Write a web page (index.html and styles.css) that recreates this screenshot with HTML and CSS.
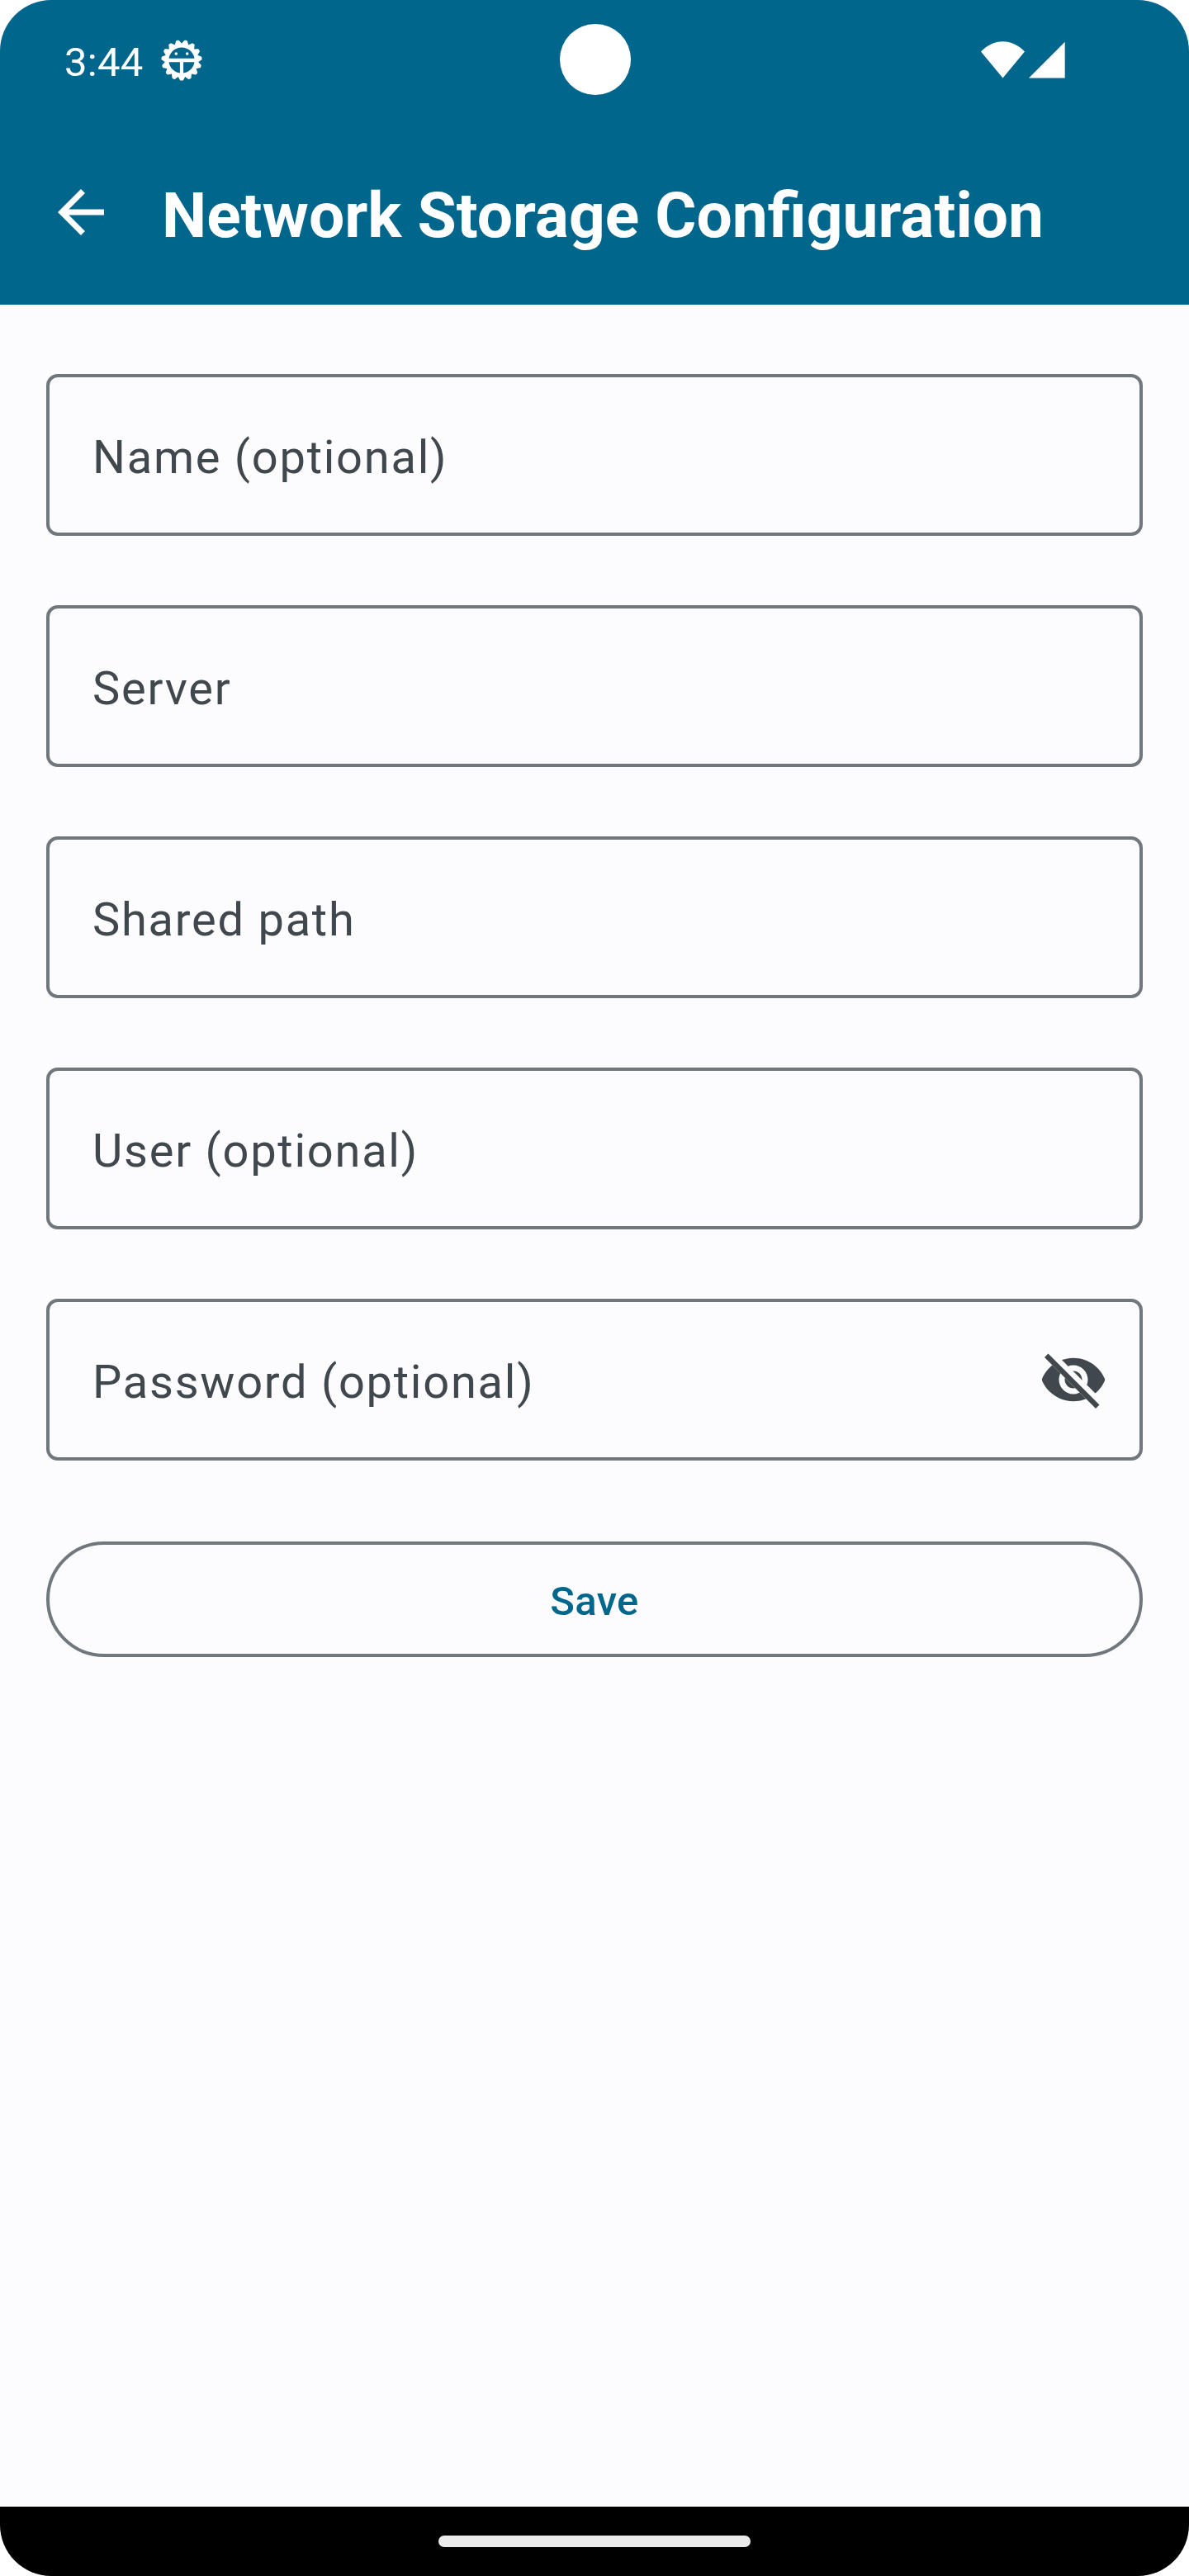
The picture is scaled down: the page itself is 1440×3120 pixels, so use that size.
FILE: index.html
```
<!DOCTYPE html>
<html lang="en">
<head>
<meta charset="utf-8">
<title>Network Storage Configuration</title>
<link rel="stylesheet" href="styles.css">
</head>
<body>
<div class="screen">
  <header class="header">
    <div class="status-bar">
      <span class="clock">3:44</span>
      <svg class="gear" viewBox="-26 -26 52 52">
        <defs><path id="tooth" d="M-3.4-18.5L-.8-23.2H.8L3.4-18.5Z" stroke="#fff" stroke-width="2.8" stroke-linejoin="round"/></defs>
        <g fill="#fff">
          <use href="#tooth" transform="rotate(12)"/><use href="#tooth" transform="rotate(36)"/><use href="#tooth" transform="rotate(60)"/><use href="#tooth" transform="rotate(84)"/><use href="#tooth" transform="rotate(108)"/><use href="#tooth" transform="rotate(132)"/><use href="#tooth" transform="rotate(156)"/><use href="#tooth" transform="rotate(180)"/><use href="#tooth" transform="rotate(204)"/><use href="#tooth" transform="rotate(228)"/><use href="#tooth" transform="rotate(252)"/><use href="#tooth" transform="rotate(276)"/><use href="#tooth" transform="rotate(300)"/><use href="#tooth" transform="rotate(324)"/><use href="#tooth" transform="rotate(348)"/>
        </g>
        <circle r="17.8" fill="#00668b" stroke="#fff" stroke-width="4.4"/>
        <path d="M-17-2.2H17V2.2H2.1V17H-2.1V2.2H-17Z" fill="#fff"/>
        <circle cx="-6.7" cy="-7.9" r="1.8" fill="#fff"/><circle cx="6.7" cy="-7.9" r="1.8" fill="#fff"/>
      </svg>
      <span class="camera"></span>
      <svg class="signals" viewBox="0 0 102 45">
        <path d="M0 12.5C7.500 4.500 17 .2 26.500 .2S45.500 4.500 53 12.500L26.500 44.500Z" fill="#fff"/>
        <path d="M58 44.500L101.700 .7V44.500Z" fill="#fff"/>
      </svg>
    </div>
    <div class="app-bar">
      <svg class="icon" viewBox="0 0 24 24"><path fill="#fff" d="M20 11H7.83l5.59-5.59L12 4l-8 8 8 8 1.41-1.41L7.83 13H20z"/></svg>
      <h1 class="title">Network Storage Configuration</h1>
    </div>
  </header>
  <main class="form">
    <div class="field"><span class="label">Name (optional)</span></div>
    <div class="field"><span class="label">Server</span></div>
    <div class="field"><span class="label">Shared path</span></div>
    <div class="field"><span class="label">User (optional)</span></div>
    <div class="field">
      <span class="label">Password (optional)</span>
      <svg class="icon" viewBox="0 0 24 24" fill="#40484d">
        <defs><clipPath id="slash"><path d="M2 4.270L19.730 22L22.270 19.460L4.540 1.730V1H23V23H1V4.270Z"/></clipPath></defs>
        <path clip-path="url(#slash)" d="M12,4.5C7,4.5 2.73,7.61 1,12c1.73,4.39 6,7.5 11,7.5s9.27,-3.11 11,-7.5c-1.73,-4.39 -6,-7.5 -11,-7.5zM12,17c-2.76,0 -5,-2.24 -5,-5s2.24,-5 5,-5 5,2.24 5,5 -2.240,5 -5,5zM12,9c-1.66,0 -3,1.34 -3,3s1.34,3 3,3 3,-1.34 3,-3 -1.34,-3 -3,-3z"/>
        <path d="M2 4.270L3.270 3L21 20.730L19.730 22Z"/>
      </svg>
    </div>
    <button class="save">Save</button>
  </main>
  <footer class="nav-bar"><span class="handle"></span></footer>
</div>
</body>
</html>
```
FILE: styles.css
```
* {
  box-sizing: border-box;
}

body {
  margin: 0;
  background: #fff;
  font-family: Roboto, sans-serif;
}

.screen {
  display: flex;
  flex-direction: column;
  width: 1440px;
  height: 3120px;
  overflow: hidden;
  border-radius: 62px;
  background: #fcfcff;
}

.header {
  height: 369px;
  background: #00668b;
  color: #fff;
}

.status-bar {
  position: relative;
  display: flex;
  align-items: center;
  height: 145px;
  padding: 0 150px 0 78px;
}

.clock {
  padding-top: 6px;
  font-size: 49px;
  letter-spacing: 0.3px;
  line-height: 58px;
}

.gear {
  width: 52px;
  height: 52px;
  margin: 1px 0 0 20px;
}

.camera {
  position: absolute;
  left: 677.5px;
  top: 29px;
  width: 86px;
  height: 86px;
  border-radius: 50%;
  background: #fff;
}

.signals {
  width: 102px;
  height: 45px;
  margin-left: auto;
}

.app-bar {
  display: flex;
  align-items: center;
  gap: 56px;
  height: 224px;
  padding: 0 56px;
}

.icon {
  flex: none;
  width: 84px;
  height: 84px;
}

.title {
  margin: 0;
  padding-top: 8px;
  font-size: 76.75px;
  font-weight: 700;
  line-height: 90px;
  white-space: nowrap;
}

.form {
  display: flex;
  flex: 1;
  flex-direction: column;
  gap: 84px;
  padding: 84px 56px;
}

.field {
  display: flex;
  align-items: center;
  justify-content: space-between;
  height: 196px;
  padding: 0 38px 0 52px;
  border: 4px solid #70787d;
  border-radius: 14px;
  color: #40484d;
}

.label {
  padding-top: 6px;
  font-size: 56px;
  letter-spacing: 1.75px;
  line-height: 66px;
}

.save {
  height: 140px;
  margin-top: 14px;
  padding: 5px 0 0;
  border: 4px solid #70787d;
  border-radius: 70px;
  background: none;
  color: #00668b;
  font: 500 49px/58px Roboto, sans-serif;
  letter-spacing: 0.35px;
}

.nav-bar {
  display: flex;
  align-items: center;
  justify-content: center;
  height: 84px;
  background: #000;
}

.handle {
  width: 378px;
  height: 14px;
  border-radius: 7px;
  background: #ebebeb;
}
```
